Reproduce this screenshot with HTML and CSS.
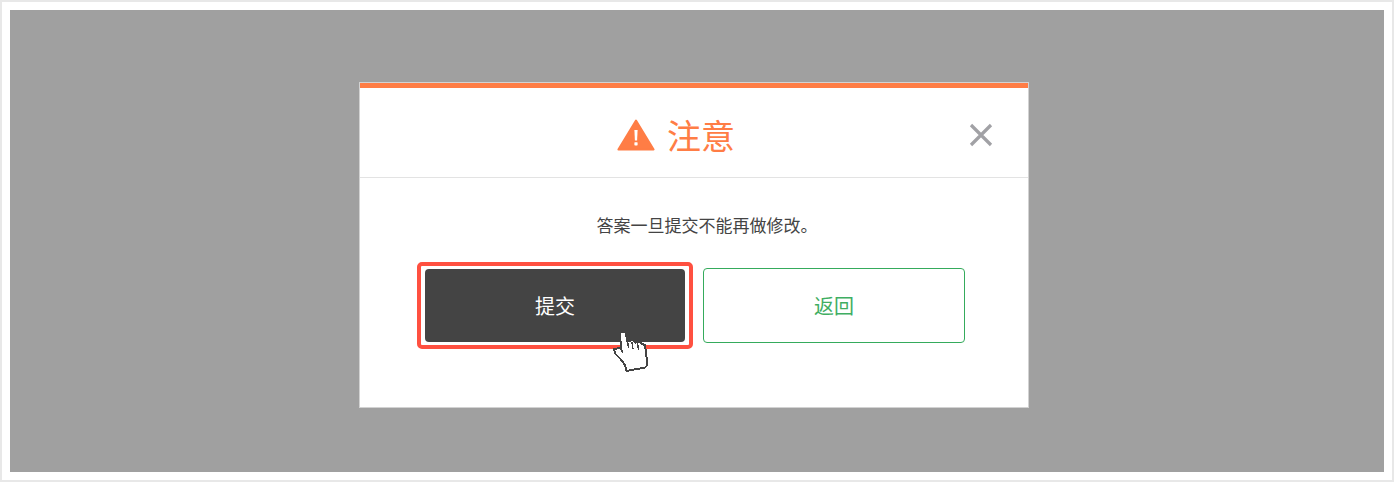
FILE: index.html
```html
<!DOCTYPE html>
<html lang="zh-CN">
<head>
    <meta charset="UTF-8">
    <meta name="viewport" content="width=device-width, initial-scale=1.0">
    <title>注意</title>

    <link rel="stylesheet" href="styles.css">
</head>
<body>

    <div class="frame">
        <div class="overlay">

            <!-- Dialog -->
            <div class="dialog">
                <div class="dialog-header">
                    <svg class="warn-icon" width="38" height="32" viewBox="0 0 38 32">
                        <path d="M19 1.5 L36.6 30.5 H1.4 Z" fill="#ff7d45" stroke="#ff7d45" stroke-width="2" stroke-linejoin="round"/>
                        <path d="M17.4 11 h3.2 l-.5 10.6 h-2.2 Z" fill="#fff"/>
                        <rect x="17.4" y="23.2" width="3.2" height="3.2" rx=".6" fill="#fff"/>
                    </svg>
                    <span class="dialog-title">注意</span>
                    <svg class="close-icon" width="24" height="24" viewBox="0 0 24 24">
                        <path d="M2 2 L22 22 M22 2 L2 22" stroke="#a1a1a5" stroke-width="3.2" fill="none"/>
                    </svg>
                </div>

                <div class="dialog-body">
                    <p class="message">答案一旦提交不能再做修改。</p>
                    <div class="actions">
                        <div class="highlight">
                            <button class="btn btn-dark">提交</button>
                            <svg class="hand" width="40" height="44" viewBox="20 10 40 44">
                                <path d="M29.5 12.5 L35.5 12 L37.5 21.5 L43 20 L45.5 22.5 L50 21.5 L52 24 L55 25 L56 33 L57.5 45 L55 47.5 L36.5 51 L35 45 L30 38.5 L25 33.5 L24 29 L30 28 L31.5 30 Z" fill="#fff" stroke="#444" stroke-width="2" shape-rendering="crispEdges"/>
                                <path d="M42 22 L43 29 M47.5 23 L48.5 30 M37.5 21.5 L38.5 28" stroke="#444" stroke-width="1.4" fill="none" shape-rendering="crispEdges"/>
                            </svg>
                        </div>
                        <button class="btn btn-outline">返回</button>
                    </div>
                </div>
            </div>

        </div>
    </div>

</body>
</html>
```

FILE: styles.css
```css
/* General Styles */
body {
    font-family: "Noto Sans CJK SC", "Liberation Sans", sans-serif;
    margin: 0;
    padding: 0;
    background-color: #fff;
}

.frame {
    width: 1394px;
    height: 482px;
    box-sizing: border-box;
    padding: 8px;
    border: 2px solid #e8e8e8;
}

.overlay {
    height: 462px;
    box-sizing: border-box;
    padding: 72px 0 0 349px;
    background: #a0a0a0;
}

/* Dialog */
.dialog {
    width: 670px;
    height: 326px;
    box-sizing: border-box;
    background: #fff;
    border: 1px solid #d2d2d2;
}

.dialog-header {
    height: 89px;
    position: relative;
    display: flex;
    align-items: center;
    justify-content: center;
    gap: 12px;
    padding-right: 31px;
    border-top: 5px solid #ff7d45;
    border-bottom: 1px solid #e3e3e3;
}

.warn-icon {
    margin: 5px 0 0 -5px;
}

.dialog-title {
    font-size: 34px;
    line-height: 40px;
    margin-top: 4px;
    color: #ff7d45;
}

.close-icon {
    position: absolute;
    right: 35px;
    top: 35px;
}

.dialog-body {
    padding-top: 35px;
}

.message {
    margin: 0;
    padding-left: 26px;
    text-align: center;
    font-size: 17px;
    line-height: 24px;
    color: #444;
}

/* Buttons */
.actions {
    display: flex;
    align-items: center;
    gap: 10px;
    margin-top: 25px;
    padding-left: 57px;
}

.highlight {
    position: relative;
    display: flex;
    padding: 3px 4px;
    border: 4px solid #ff5040;
    border-radius: 5px;
}

.btn {
    font-family: inherit;
    font-size: 20px;
    border-radius: 4px;
    padding: 0;
}

.btn-dark {
    width: 260px;
    height: 73px;
    border: none;
    background: #444;
    color: #fff;
}

.btn-outline {
    width: 262px;
    height: 75px;
    border: 1px solid #35ab5c;
    background: #fff;
    color: #3fae62;
}

.hand {
    position: absolute;
    left: 189px;
    top: 64px;
}
```
